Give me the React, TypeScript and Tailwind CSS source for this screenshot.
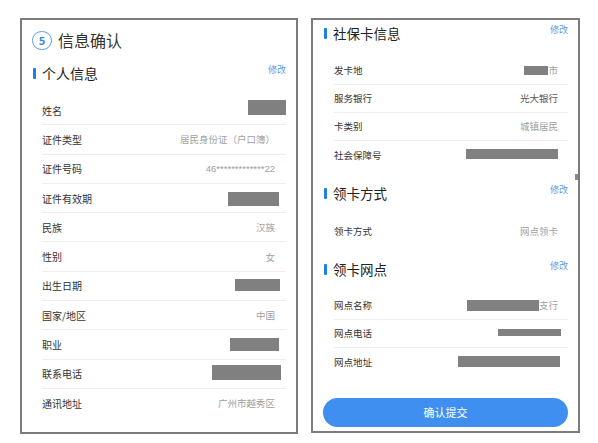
import React from "react";

type Val = React.ReactNode;

const Box = ({ w, h, cls = "" }: { w: string; h: string; cls?: string }) => (
  <span className={`inline-block bg-[#808080] ${w} ${h} ${cls}`} />
);

function LRow({ label, value, last }: { label: string; value: Val; last?: boolean }) {
  return (
    <div
      className={`flex h-[29.3px] items-center justify-between pr-[11px] ${
        last ? "" : "border-b border-[#efefef]"
      }`}
    >
      <span className="text-[10px] text-[#333]">{label}</span>
      <span className="flex items-center whitespace-nowrap text-[9.5px] text-[#a0a0a0]">{value}</span>
    </div>
  );
}

function RRow({ label, value, last, dark }: { label: string; value: Val; last?: boolean; dark?: boolean }) {
  return (
    <div
      className={`flex h-[28px] items-center justify-between pr-[10px] ${
        last ? "" : "border-b border-[#efefef]"
      }`}
    >
      <span className="text-[9.5px] text-[#333]">{label}</span>
      <span className={`flex items-center text-[9.5px] ${dark ? "text-[#555]" : "text-[#a0a0a0]"}`}>{value}</span>
    </div>
  );
}

function Header({ title, size }: { title: string; size: string }) {
  return (
    <div className="flex h-[26px] items-start justify-between pl-[11px] pr-[10px]">
      <div className="flex h-[26px] items-center">
        <span className="h-[11px] w-[3px] rounded-[1px] bg-[#1e7fe8]" />
        <span className={`ml-[6px] ${size} text-[#222]`}>{title}</span>
      </div>
      <span className="mt-[3px] text-[9px] text-[#5a9ee6]">修改</span>
    </div>
  );
}

export default function App() {
  const left: [string, Val][] = [
    ["姓名", <Box w="w-[38px]" h="h-[15px]" cls="mr-[-11px] mb-[5px]" />],
    ["证件类型", "居民身份证（户口簿）"],
    [
      "证件号码",
      <span className="font-['Liberation_Sans',sans-serif] text-[9.5px]">46*************22</span>,
    ],
    ["证件有效期", <Box w="w-[51px]" h="h-[14px]" cls="mr-[-4px] mt-[2px]" />],
    ["民族", "汉族"],
    ["性别", "女"],
    ["出生日期", <Box w="w-[45px]" h="h-[12px]" cls="mr-[-5px] mb-[2px]" />],
    ["国家/地区", "中国"],
    ["职业", <Box w="w-[49px]" h="h-[13px]" cls="mr-[-4px]" />],
    ["联系电话", <Box w="w-[69px]" h="h-[15px]" cls="mr-[-6px] mb-[3px]" />],
    ["通讯地址", "广州市越秀区"],
  ];

  return (
    <div className="flex h-[443px] w-[598px] gap-[13px] bg-white pl-[20px] pt-[18px] font-['Noto_Sans_CJK_SC','Noto_Sans',sans-serif]">
      {/* Left panel */}
      <div className="flex h-[416px] w-[278px] flex-col border-2 border-[#7c7c7c] bg-white">
        <div className="mt-[7px] flex h-[26px] items-center pl-[10px]">
          <span className="flex h-[19px] w-[20px] items-center justify-center rounded-full border-[1.5px] border-[#5d9ce8] text-[11px] font-semibold leading-none text-[#3b87e0]">
            5
          </span>
          <span className="ml-[6px] text-[16px] text-[#333]">信息确认</span>
        </div>
        <div className="mt-[7px]">
          <Header title="个人信息" size="text-[14px]" />
        </div>
        <div className="ml-[20px] mr-[10px] mt-[10px] flex flex-col">
          {left.map(([l, v], i) => (
            <LRow key={l} label={l} value={v} last={i === left.length - 1} />
          ))}
        </div>
      </div>

      {/* Right panel */}
      <div className="relative flex h-[415px] w-[269px] flex-col border-2 border-[#7c7c7c] bg-white">
        <span className="absolute right-0 top-[154px] h-[6px] w-[3px] bg-[#8a8a8a]" />
        <Header title="社保卡信息" size="text-[13.5px]" />
        <div className="ml-[21px] mr-[10px] mt-[11px] flex flex-col">
          <RRow
            label="发卡地"
            value={
              <>
                <Box w="w-[24px]" h="h-[9px]" />
                <span>市</span>
              </>
            }
          />
          <RRow label="服务银行" value="光大银行" dark />
          <RRow label="卡类别" value="城镇居民" />
          <RRow label="社会保障号" value={<Box w="w-[92px]" h="h-[10px]" cls="mb-[3px]" />} last />
        </div>
        <div className="mt-[11px]">
          <Header title="领卡方式" size="text-[13.5px]" />
        </div>
        <div className="ml-[21px] mr-[10px] mt-[11px] flex flex-col">
          <RRow label="领卡方式" value="网点领卡" last />
        </div>
        <div className="mt-[11px]">
          <Header title="领卡网点" size="text-[13.5px]" />
        </div>
        <div className="ml-[21px] mr-[10px] mt-[10px] flex flex-col">
          <RRow
            label="网点名称"
            value={
              <>
                <Box w="w-[72px]" h="h-[11px]" />
                <span>支行</span>
              </>
            }
          />
          <RRow label="网点电话" value={<Box w="w-[63px]" h="h-[7px]" cls="mr-[-3px] mb-[2px]" />} />
          <RRow label="网点地址" value={<Box w="w-[102px]" h="h-[11px]" cls="mr-[-2px] mb-[1px]" />} last />
        </div>
        <div className="mx-[10px] mt-[22px] flex h-[29px] items-center justify-center rounded-full bg-[#3f8ff0] text-[11px] text-white">
          确认提交
        </div>
      </div>
    </div>
  );
}
